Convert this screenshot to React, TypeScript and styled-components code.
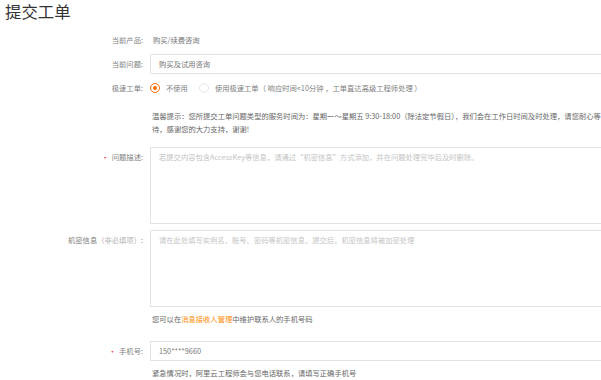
import React from 'react'
import styled, { createGlobalStyle } from 'styled-components'

const GlobalStyle = createGlobalStyle`
  body {
    margin: 0;
    overflow: hidden;
    background: #fff;
    font-family: "Noto Sans CJK SC", "Noto Sans", sans-serif;
  }
`

const Page = styled.div`
  width: 601px;
  height: 380px;
  overflow: hidden;
`

const Title = styled.h1`
  margin: 1px 0 0 5px;
  font-size: 16.4px;
  line-height: 20px;
  font-weight: 400;
  color: #333;
`

const Form = styled.div`
  display: flex;
  flex-direction: column;
`

const Row = styled.div<{ $mt: number; $top?: boolean }>`
  display: grid;
  grid-template-columns: 143px minmax(0, 1fr);
  column-gap: 7px;
  align-items: ${(p) => (p.$top ? 'start' : 'center')};
  margin-top: ${(p) => p.$mt}px;
  min-height: 16px;
`

const Label = styled.div<{ $top?: boolean }>`
  text-align: right;
  font-size: 7.3px;
  line-height: 12px;
  color: #808080;
  padding-top: ${(p) => (p.$top ? 4 : 0)}px;
  white-space: nowrap;
`

const Required = styled.span`
  color: #e23;
  margin-right: 3px;
`

const Sub = styled.span`
  color: #b0b0b0;
`

const Value = styled.div`
  font-size: 7.3px;
  line-height: 12px;
  color: #777;
  padding-left: 3px;
`

const TextInput = styled.input`
  box-sizing: border-box;
  width: 470px;
  height: 20px;
  border: 1px solid #e3e3e3;
  padding: 0 8px;
  font-family: inherit;
  font-size: 7.3px;
  color: #777;
  outline: none;
  background: #fff;
`

const TextArea = styled.textarea`
  box-sizing: border-box;
  display: block;
  width: 470px;
  height: 77px;
  border: 1px solid #e3e3e3;
  padding: 3px 8px;
  font-family: inherit;
  font-size: 7.3px;
  line-height: 12px;
  color: #777;
  resize: none;
  outline: none;
  &::placeholder {
    color: #c4c4c4;
  }
`

const RadioGroup = styled.div`
  display: flex;
  align-items: center;
  gap: 11px;
`

const RadioItem = styled.label`
  display: flex;
  align-items: center;
  gap: 6px;
  font-size: 7.3px;
  line-height: 12px;
  color: #808080;
  white-space: pre;
`

const RadioDot = styled.span<{ $on?: boolean }>`
  box-sizing: border-box;
  width: 10px;
  height: 10px;
  border-radius: 50%;
  border: 1px solid ${(p) => (p.$on ? '#ff6a00' : '#e6e6e6')};
  display: flex;
  align-items: center;
  justify-content: center;
  &::after {
    content: '';
    width: 4px;
    height: 4px;
    border-radius: 50%;
    background: ${(p) => (p.$on ? '#ff6a00' : 'transparent')};
  }
`

const Notice = styled.div`
  width: 452px;
  padding-left: 2px;
  font-size: 7.3px;
  line-height: 13px;
  color: #666;
`

const Hint = styled.div`
  font-size: 7.3px;
  line-height: 14px;
  color: #666;
  padding-left: 2px;
`

const Link = styled.a`
  color: #ff8a00;
  text-decoration: none;
`

export default function App() {
  return (
    <Page>
      <GlobalStyle />
      <Title>提交工单</Title>
      <Form>
        <Row $mt={11}>
          <Label>当前产品:</Label>
          <Value>购买/续费咨询</Value>
        </Row>
        <Row $mt={6}>
          <Label>当前问题:</Label>
          <TextInput readOnly value="购买及试用咨询" />
        </Row>
        <Row $mt={6}>
          <Label>极速工单:</Label>
          <RadioGroup>
            <RadioItem>
              <RadioDot $on />
              不使用
            </RadioItem>
            <RadioItem>
              <RadioDot />
              {'使用极速工单（ 响应时间<10分钟 ，工单直达高级工程师处理 ）'}
            </RadioItem>
          </RadioGroup>
        </Row>
        <Row $mt={14}>
          <div />
          <Notice>
            温馨提示：您所提交工单问题类型的服务时间为：星期一～星期五 9:30-18:00（除法定节假日），我们会在工作日时间及时处理，请您耐心等待，感谢您的大力支持，谢谢!
          </Notice>
        </Row>
        <Row $mt={11} $top>
          <Label $top>
            <Required>•</Required>问题描述:
          </Label>
          <TextArea placeholder="若提交内容包含AccessKey等信息，请通过“机密信息”方式添加，并在问题处理完毕后及时删除。" />
        </Row>
        <Row $mt={6} $top>
          <Label $top>
            机密信息<Sub>（非必填项）</Sub>:
          </Label>
          <TextArea placeholder="请在此处填写实例名、账号、密码等机密信息，提交后，机密信息将被加密处理" />
        </Row>
        <Row $mt={4}>
          <div />
          <Hint>
            您可以在<Link>消息接收人管理</Link>中维护联系人的手机号码
          </Hint>
        </Row>
        <Row $mt={14}>
          <Label>
            <Required>•</Required>手机号:
          </Label>
          <TextInput readOnly value="150****9660" />
        </Row>
        <Row $mt={4}>
          <div />
          <Hint>紧急情况时，阿里云工程师会与您电话联系，请填写正确手机号</Hint>
        </Row>
      </Form>
    </Page>
  )
}
